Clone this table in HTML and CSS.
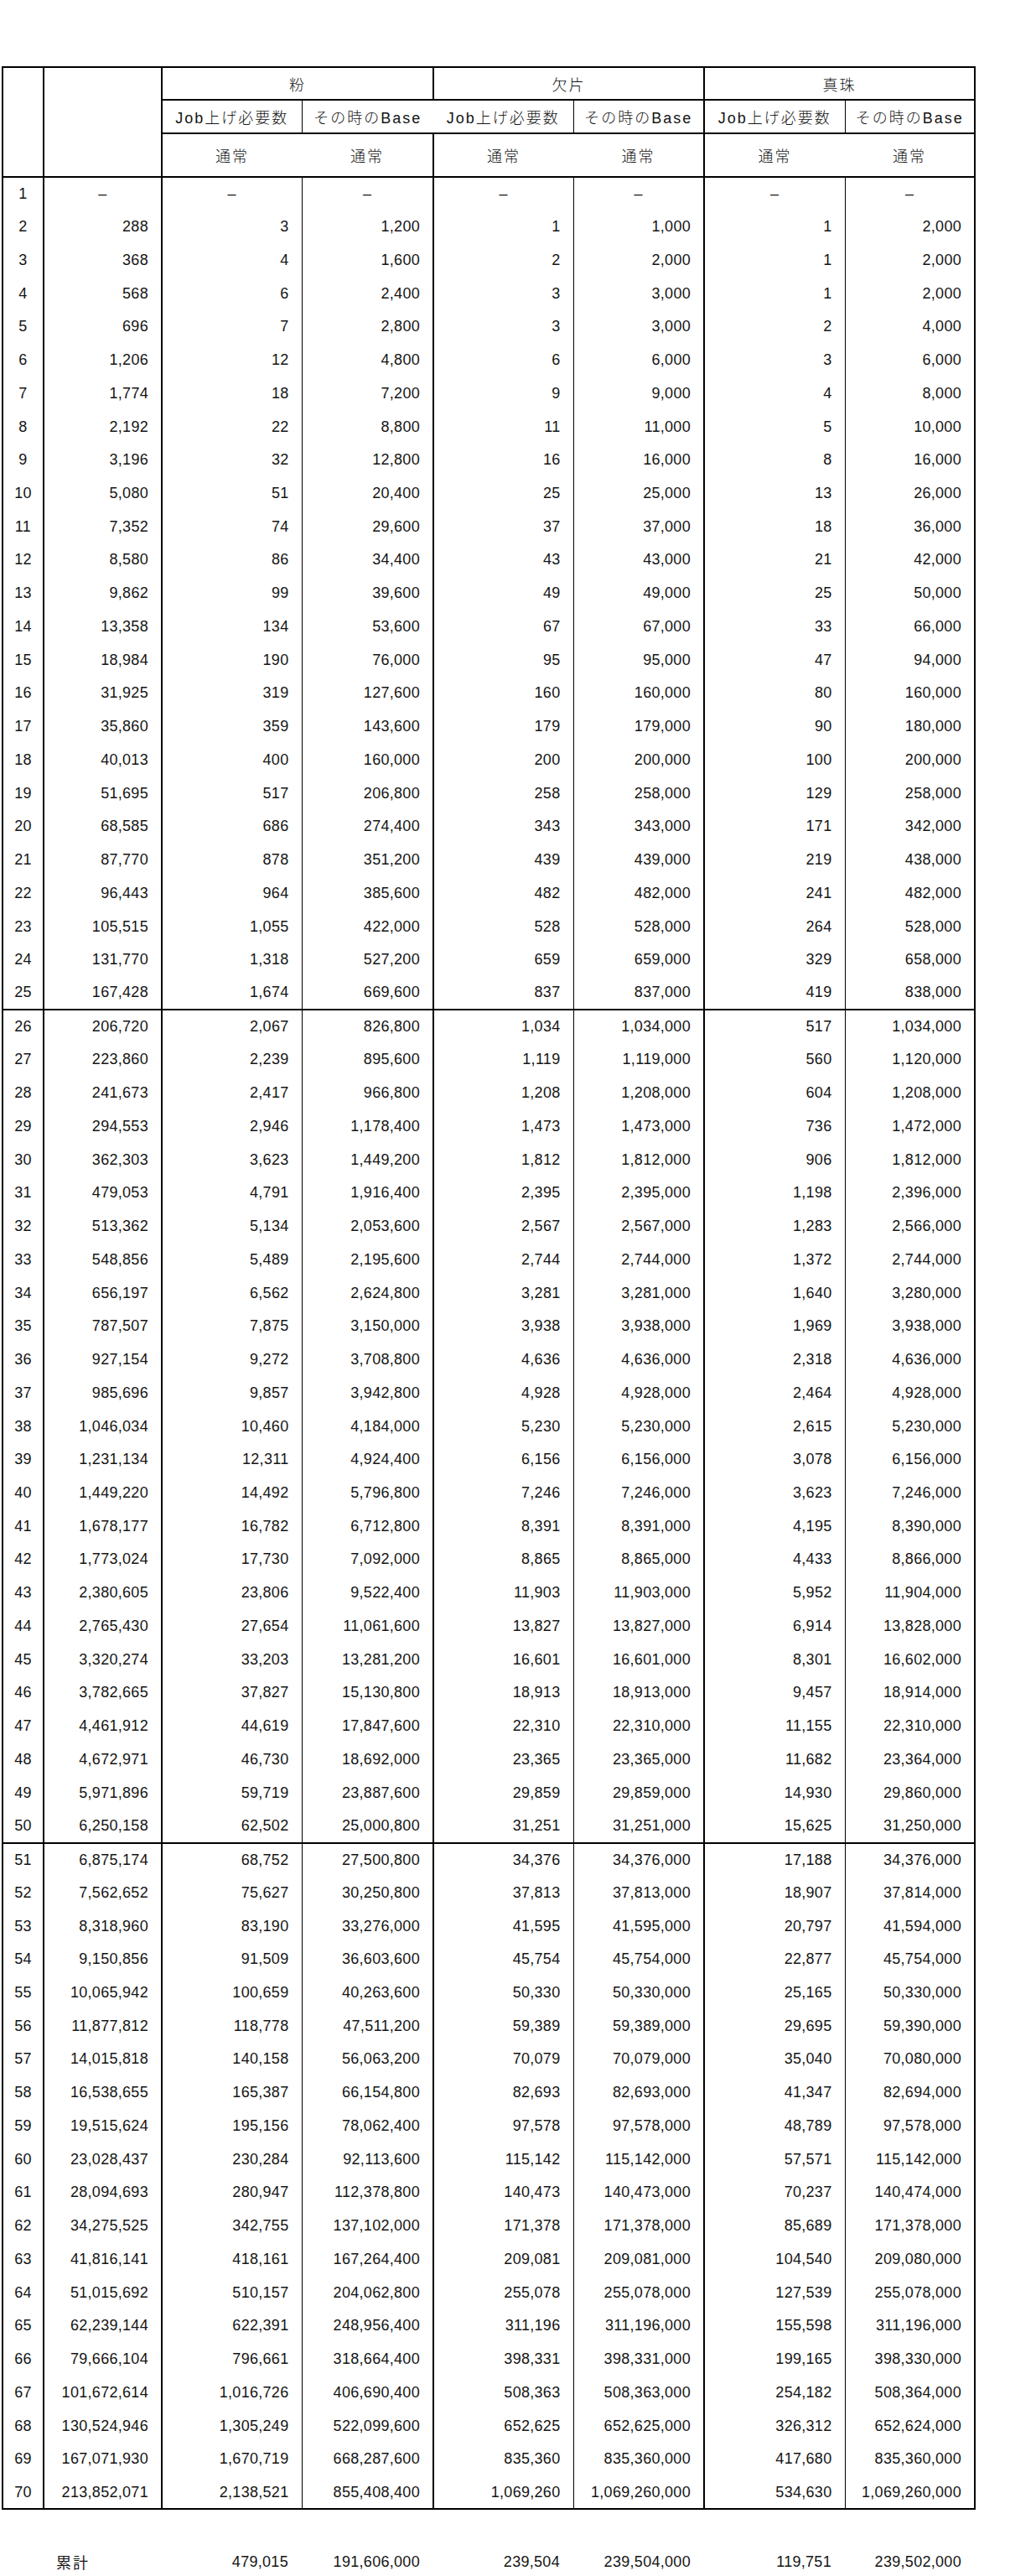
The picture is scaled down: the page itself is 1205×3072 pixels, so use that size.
FILE: index.html
```html
<!DOCTYPE html>
<html lang="ja">
<head>
<meta charset="utf-8">
<title>Job上げ必要数</title>
<link rel="stylesheet" href="styles.css">
</head>
<body>
<table class="sheet">
<colgroup><col class="w1"><col class="w2"><col class="w3"><col class="w4"><col class="w5"><col class="w6"><col class="w7"><col class="w8"></colgroup>
<thead>
<tr class="h1">
<th rowspan="3" class="lv"></th>
<th rowspan="3" class="blank"></th>
<th colspan="2" class="grp">粉</th>
<th colspan="2" class="grp">欠片</th>
<th colspan="2" class="grp">真珠</th>
</tr>
<tr class="h2">
<th class="thin">Job上げ必要数</th>
<th class="none">その時のBase</th>
<th class="thin">Job上げ必要数</th>
<th class="thick">その時のBase</th>
<th class="thin">Job上げ必要数</th>
<th class="thick">その時のBase</th>
</tr>
<tr class="h3">
<th class="none">通常</th>
<th class="thick">通常</th>
<th class="none">通常</th>
<th class="thick">通常</th>
<th class="none">通常</th>
<th class="thick">通常</th>
</tr>
</thead>
<tbody>
<tr class="first"><td>1</td><td>–</td><td>–</td><td>–</td><td>–</td><td>–</td><td>–</td><td>–</td></tr>
<tr><td>2</td><td>288</td><td>3</td><td>1,200</td><td>1</td><td>1,000</td><td>1</td><td>2,000</td></tr>
<tr><td>3</td><td>368</td><td>4</td><td>1,600</td><td>2</td><td>2,000</td><td>1</td><td>2,000</td></tr>
<tr><td>4</td><td>568</td><td>6</td><td>2,400</td><td>3</td><td>3,000</td><td>1</td><td>2,000</td></tr>
<tr><td>5</td><td>696</td><td>7</td><td>2,800</td><td>3</td><td>3,000</td><td>2</td><td>4,000</td></tr>
<tr><td>6</td><td>1,206</td><td>12</td><td>4,800</td><td>6</td><td>6,000</td><td>3</td><td>6,000</td></tr>
<tr><td>7</td><td>1,774</td><td>18</td><td>7,200</td><td>9</td><td>9,000</td><td>4</td><td>8,000</td></tr>
<tr><td>8</td><td>2,192</td><td>22</td><td>8,800</td><td>11</td><td>11,000</td><td>5</td><td>10,000</td></tr>
<tr><td>9</td><td>3,196</td><td>32</td><td>12,800</td><td>16</td><td>16,000</td><td>8</td><td>16,000</td></tr>
<tr><td>10</td><td>5,080</td><td>51</td><td>20,400</td><td>25</td><td>25,000</td><td>13</td><td>26,000</td></tr>
<tr><td>11</td><td>7,352</td><td>74</td><td>29,600</td><td>37</td><td>37,000</td><td>18</td><td>36,000</td></tr>
<tr><td>12</td><td>8,580</td><td>86</td><td>34,400</td><td>43</td><td>43,000</td><td>21</td><td>42,000</td></tr>
<tr><td>13</td><td>9,862</td><td>99</td><td>39,600</td><td>49</td><td>49,000</td><td>25</td><td>50,000</td></tr>
<tr><td>14</td><td>13,358</td><td>134</td><td>53,600</td><td>67</td><td>67,000</td><td>33</td><td>66,000</td></tr>
<tr><td>15</td><td>18,984</td><td>190</td><td>76,000</td><td>95</td><td>95,000</td><td>47</td><td>94,000</td></tr>
<tr><td>16</td><td>31,925</td><td>319</td><td>127,600</td><td>160</td><td>160,000</td><td>80</td><td>160,000</td></tr>
<tr><td>17</td><td>35,860</td><td>359</td><td>143,600</td><td>179</td><td>179,000</td><td>90</td><td>180,000</td></tr>
<tr><td>18</td><td>40,013</td><td>400</td><td>160,000</td><td>200</td><td>200,000</td><td>100</td><td>200,000</td></tr>
<tr><td>19</td><td>51,695</td><td>517</td><td>206,800</td><td>258</td><td>258,000</td><td>129</td><td>258,000</td></tr>
<tr><td>20</td><td>68,585</td><td>686</td><td>274,400</td><td>343</td><td>343,000</td><td>171</td><td>342,000</td></tr>
<tr><td>21</td><td>87,770</td><td>878</td><td>351,200</td><td>439</td><td>439,000</td><td>219</td><td>438,000</td></tr>
<tr><td>22</td><td>96,443</td><td>964</td><td>385,600</td><td>482</td><td>482,000</td><td>241</td><td>482,000</td></tr>
<tr><td>23</td><td>105,515</td><td>1,055</td><td>422,000</td><td>528</td><td>528,000</td><td>264</td><td>528,000</td></tr>
<tr><td>24</td><td>131,770</td><td>1,318</td><td>527,200</td><td>659</td><td>659,000</td><td>329</td><td>658,000</td></tr>
<tr class="sep"><td>25</td><td>167,428</td><td>1,674</td><td>669,600</td><td>837</td><td>837,000</td><td>419</td><td>838,000</td></tr>
<tr><td>26</td><td>206,720</td><td>2,067</td><td>826,800</td><td>1,034</td><td>1,034,000</td><td>517</td><td>1,034,000</td></tr>
<tr><td>27</td><td>223,860</td><td>2,239</td><td>895,600</td><td>1,119</td><td>1,119,000</td><td>560</td><td>1,120,000</td></tr>
<tr><td>28</td><td>241,673</td><td>2,417</td><td>966,800</td><td>1,208</td><td>1,208,000</td><td>604</td><td>1,208,000</td></tr>
<tr><td>29</td><td>294,553</td><td>2,946</td><td>1,178,400</td><td>1,473</td><td>1,473,000</td><td>736</td><td>1,472,000</td></tr>
<tr><td>30</td><td>362,303</td><td>3,623</td><td>1,449,200</td><td>1,812</td><td>1,812,000</td><td>906</td><td>1,812,000</td></tr>
<tr><td>31</td><td>479,053</td><td>4,791</td><td>1,916,400</td><td>2,395</td><td>2,395,000</td><td>1,198</td><td>2,396,000</td></tr>
<tr><td>32</td><td>513,362</td><td>5,134</td><td>2,053,600</td><td>2,567</td><td>2,567,000</td><td>1,283</td><td>2,566,000</td></tr>
<tr><td>33</td><td>548,856</td><td>5,489</td><td>2,195,600</td><td>2,744</td><td>2,744,000</td><td>1,372</td><td>2,744,000</td></tr>
<tr><td>34</td><td>656,197</td><td>6,562</td><td>2,624,800</td><td>3,281</td><td>3,281,000</td><td>1,640</td><td>3,280,000</td></tr>
<tr><td>35</td><td>787,507</td><td>7,875</td><td>3,150,000</td><td>3,938</td><td>3,938,000</td><td>1,969</td><td>3,938,000</td></tr>
<tr><td>36</td><td>927,154</td><td>9,272</td><td>3,708,800</td><td>4,636</td><td>4,636,000</td><td>2,318</td><td>4,636,000</td></tr>
<tr><td>37</td><td>985,696</td><td>9,857</td><td>3,942,800</td><td>4,928</td><td>4,928,000</td><td>2,464</td><td>4,928,000</td></tr>
<tr><td>38</td><td>1,046,034</td><td>10,460</td><td>4,184,000</td><td>5,230</td><td>5,230,000</td><td>2,615</td><td>5,230,000</td></tr>
<tr><td>39</td><td>1,231,134</td><td>12,311</td><td>4,924,400</td><td>6,156</td><td>6,156,000</td><td>3,078</td><td>6,156,000</td></tr>
<tr><td>40</td><td>1,449,220</td><td>14,492</td><td>5,796,800</td><td>7,246</td><td>7,246,000</td><td>3,623</td><td>7,246,000</td></tr>
<tr><td>41</td><td>1,678,177</td><td>16,782</td><td>6,712,800</td><td>8,391</td><td>8,391,000</td><td>4,195</td><td>8,390,000</td></tr>
<tr><td>42</td><td>1,773,024</td><td>17,730</td><td>7,092,000</td><td>8,865</td><td>8,865,000</td><td>4,433</td><td>8,866,000</td></tr>
<tr><td>43</td><td>2,380,605</td><td>23,806</td><td>9,522,400</td><td>11,903</td><td>11,903,000</td><td>5,952</td><td>11,904,000</td></tr>
<tr><td>44</td><td>2,765,430</td><td>27,654</td><td>11,061,600</td><td>13,827</td><td>13,827,000</td><td>6,914</td><td>13,828,000</td></tr>
<tr><td>45</td><td>3,320,274</td><td>33,203</td><td>13,281,200</td><td>16,601</td><td>16,601,000</td><td>8,301</td><td>16,602,000</td></tr>
<tr><td>46</td><td>3,782,665</td><td>37,827</td><td>15,130,800</td><td>18,913</td><td>18,913,000</td><td>9,457</td><td>18,914,000</td></tr>
<tr><td>47</td><td>4,461,912</td><td>44,619</td><td>17,847,600</td><td>22,310</td><td>22,310,000</td><td>11,155</td><td>22,310,000</td></tr>
<tr><td>48</td><td>4,672,971</td><td>46,730</td><td>18,692,000</td><td>23,365</td><td>23,365,000</td><td>11,682</td><td>23,364,000</td></tr>
<tr><td>49</td><td>5,971,896</td><td>59,719</td><td>23,887,600</td><td>29,859</td><td>29,859,000</td><td>14,930</td><td>29,860,000</td></tr>
<tr class="sep"><td>50</td><td>6,250,158</td><td>62,502</td><td>25,000,800</td><td>31,251</td><td>31,251,000</td><td>15,625</td><td>31,250,000</td></tr>
<tr><td>51</td><td>6,875,174</td><td>68,752</td><td>27,500,800</td><td>34,376</td><td>34,376,000</td><td>17,188</td><td>34,376,000</td></tr>
<tr><td>52</td><td>7,562,652</td><td>75,627</td><td>30,250,800</td><td>37,813</td><td>37,813,000</td><td>18,907</td><td>37,814,000</td></tr>
<tr><td>53</td><td>8,318,960</td><td>83,190</td><td>33,276,000</td><td>41,595</td><td>41,595,000</td><td>20,797</td><td>41,594,000</td></tr>
<tr><td>54</td><td>9,150,856</td><td>91,509</td><td>36,603,600</td><td>45,754</td><td>45,754,000</td><td>22,877</td><td>45,754,000</td></tr>
<tr><td>55</td><td>10,065,942</td><td>100,659</td><td>40,263,600</td><td>50,330</td><td>50,330,000</td><td>25,165</td><td>50,330,000</td></tr>
<tr><td>56</td><td>11,877,812</td><td>118,778</td><td>47,511,200</td><td>59,389</td><td>59,389,000</td><td>29,695</td><td>59,390,000</td></tr>
<tr><td>57</td><td>14,015,818</td><td>140,158</td><td>56,063,200</td><td>70,079</td><td>70,079,000</td><td>35,040</td><td>70,080,000</td></tr>
<tr><td>58</td><td>16,538,655</td><td>165,387</td><td>66,154,800</td><td>82,693</td><td>82,693,000</td><td>41,347</td><td>82,694,000</td></tr>
<tr><td>59</td><td>19,515,624</td><td>195,156</td><td>78,062,400</td><td>97,578</td><td>97,578,000</td><td>48,789</td><td>97,578,000</td></tr>
<tr><td>60</td><td>23,028,437</td><td>230,284</td><td>92,113,600</td><td>115,142</td><td>115,142,000</td><td>57,571</td><td>115,142,000</td></tr>
<tr><td>61</td><td>28,094,693</td><td>280,947</td><td>112,378,800</td><td>140,473</td><td>140,473,000</td><td>70,237</td><td>140,474,000</td></tr>
<tr><td>62</td><td>34,275,525</td><td>342,755</td><td>137,102,000</td><td>171,378</td><td>171,378,000</td><td>85,689</td><td>171,378,000</td></tr>
<tr><td>63</td><td>41,816,141</td><td>418,161</td><td>167,264,400</td><td>209,081</td><td>209,081,000</td><td>104,540</td><td>209,080,000</td></tr>
<tr><td>64</td><td>51,015,692</td><td>510,157</td><td>204,062,800</td><td>255,078</td><td>255,078,000</td><td>127,539</td><td>255,078,000</td></tr>
<tr><td>65</td><td>62,239,144</td><td>622,391</td><td>248,956,400</td><td>311,196</td><td>311,196,000</td><td>155,598</td><td>311,196,000</td></tr>
<tr><td>66</td><td>79,666,104</td><td>796,661</td><td>318,664,400</td><td>398,331</td><td>398,331,000</td><td>199,165</td><td>398,330,000</td></tr>
<tr><td>67</td><td>101,672,614</td><td>1,016,726</td><td>406,690,400</td><td>508,363</td><td>508,363,000</td><td>254,182</td><td>508,364,000</td></tr>
<tr><td>68</td><td>130,524,946</td><td>1,305,249</td><td>522,099,600</td><td>652,625</td><td>652,625,000</td><td>326,312</td><td>652,624,000</td></tr>
<tr><td>69</td><td>167,071,930</td><td>1,670,719</td><td>668,287,600</td><td>835,360</td><td>835,360,000</td><td>417,680</td><td>835,360,000</td></tr>
<tr class="sep"><td>70</td><td>213,852,071</td><td>2,138,521</td><td>855,408,400</td><td>1,069,260</td><td>1,069,260,000</td><td>534,630</td><td>1,069,260,000</td></tr>
</tbody>
</table>
<table class="total">
<colgroup><col class="w1"><col class="w2"><col class="w3"><col class="w4"><col class="w5"><col class="w6"><col class="w7"><col class="w8"></colgroup>
<tr><td></td><td class="label">累計</td><td>479,015</td><td>191,606,000</td><td>239,504</td><td>239,504,000</td><td>119,751</td><td>239,502,000</td></tr>
</table>
</body>
</html>
```

FILE: styles.css
```css
html { background: #fff; }
body {
  margin: 0;
  font-family: "Liberation Sans", "Noto Sans CJK JP", sans-serif;
  font-size: 18px;
  color: #151515;
}
.sheet, .total {
  border-collapse: collapse;
  table-layout: fixed;
  width: 1160px;
  margin-left: 2px;
}
.sheet { margin-top: 79px; }
.total { margin-top: 42px; }
.w1 { width: 49px; }
.w2 { width: 141px; }
.w3 { width: 167px; }
.w4 { width: 157px; }
.w5 { width: 167px; }
.w6 { width: 156px; }
.w7 { width: 168px; }
.w8 { width: 155px; }

th {
  font-weight: 300;
  padding: 0;
  text-align: center;
  letter-spacing: 2px;
  white-space: nowrap;
  border-top: 2px solid #000;
  border-bottom: 2px solid #000;
}
.h1 { height: 39px; }
.h2 { height: 40px; }
.h3 { height: 52px; }
th.lv { border-left: 2px solid #000; border-right: 2px solid #000; }
th.blank { border-right: 2px solid #000; }
th.grp { border-right: 2px solid #000; }
th.thin { border-right: 1px solid #000; }
th.thick { border-right: 2px solid #000; }

td {
  padding: 0 15px 0 0;
  text-align: right;
  white-space: nowrap;
  vertical-align: middle;
  letter-spacing: 0.3px;
}
.sheet tbody tr { height: 39.74px; }
.sheet tbody td { border-right: 1px solid #000; }
.sheet tbody td:nth-child(1) {
  border-left: 2px solid #000;
  border-right: 2px solid #000;
  text-align: center;
  padding: 0;
}
.sheet tbody td:nth-child(2),
.sheet tbody td:nth-child(4),
.sheet tbody td:nth-child(6),
.sheet tbody td:nth-child(8) { border-right: 2px solid #000; }
.sheet tbody tr.first td { text-align: center; padding: 0; }
.sheet tbody tr.sep td { border-bottom: 2px solid #000; }

.total tr { height: 40px; }
.total td.label { text-align: left; padding-left: 16px; letter-spacing: 2px; }
```
